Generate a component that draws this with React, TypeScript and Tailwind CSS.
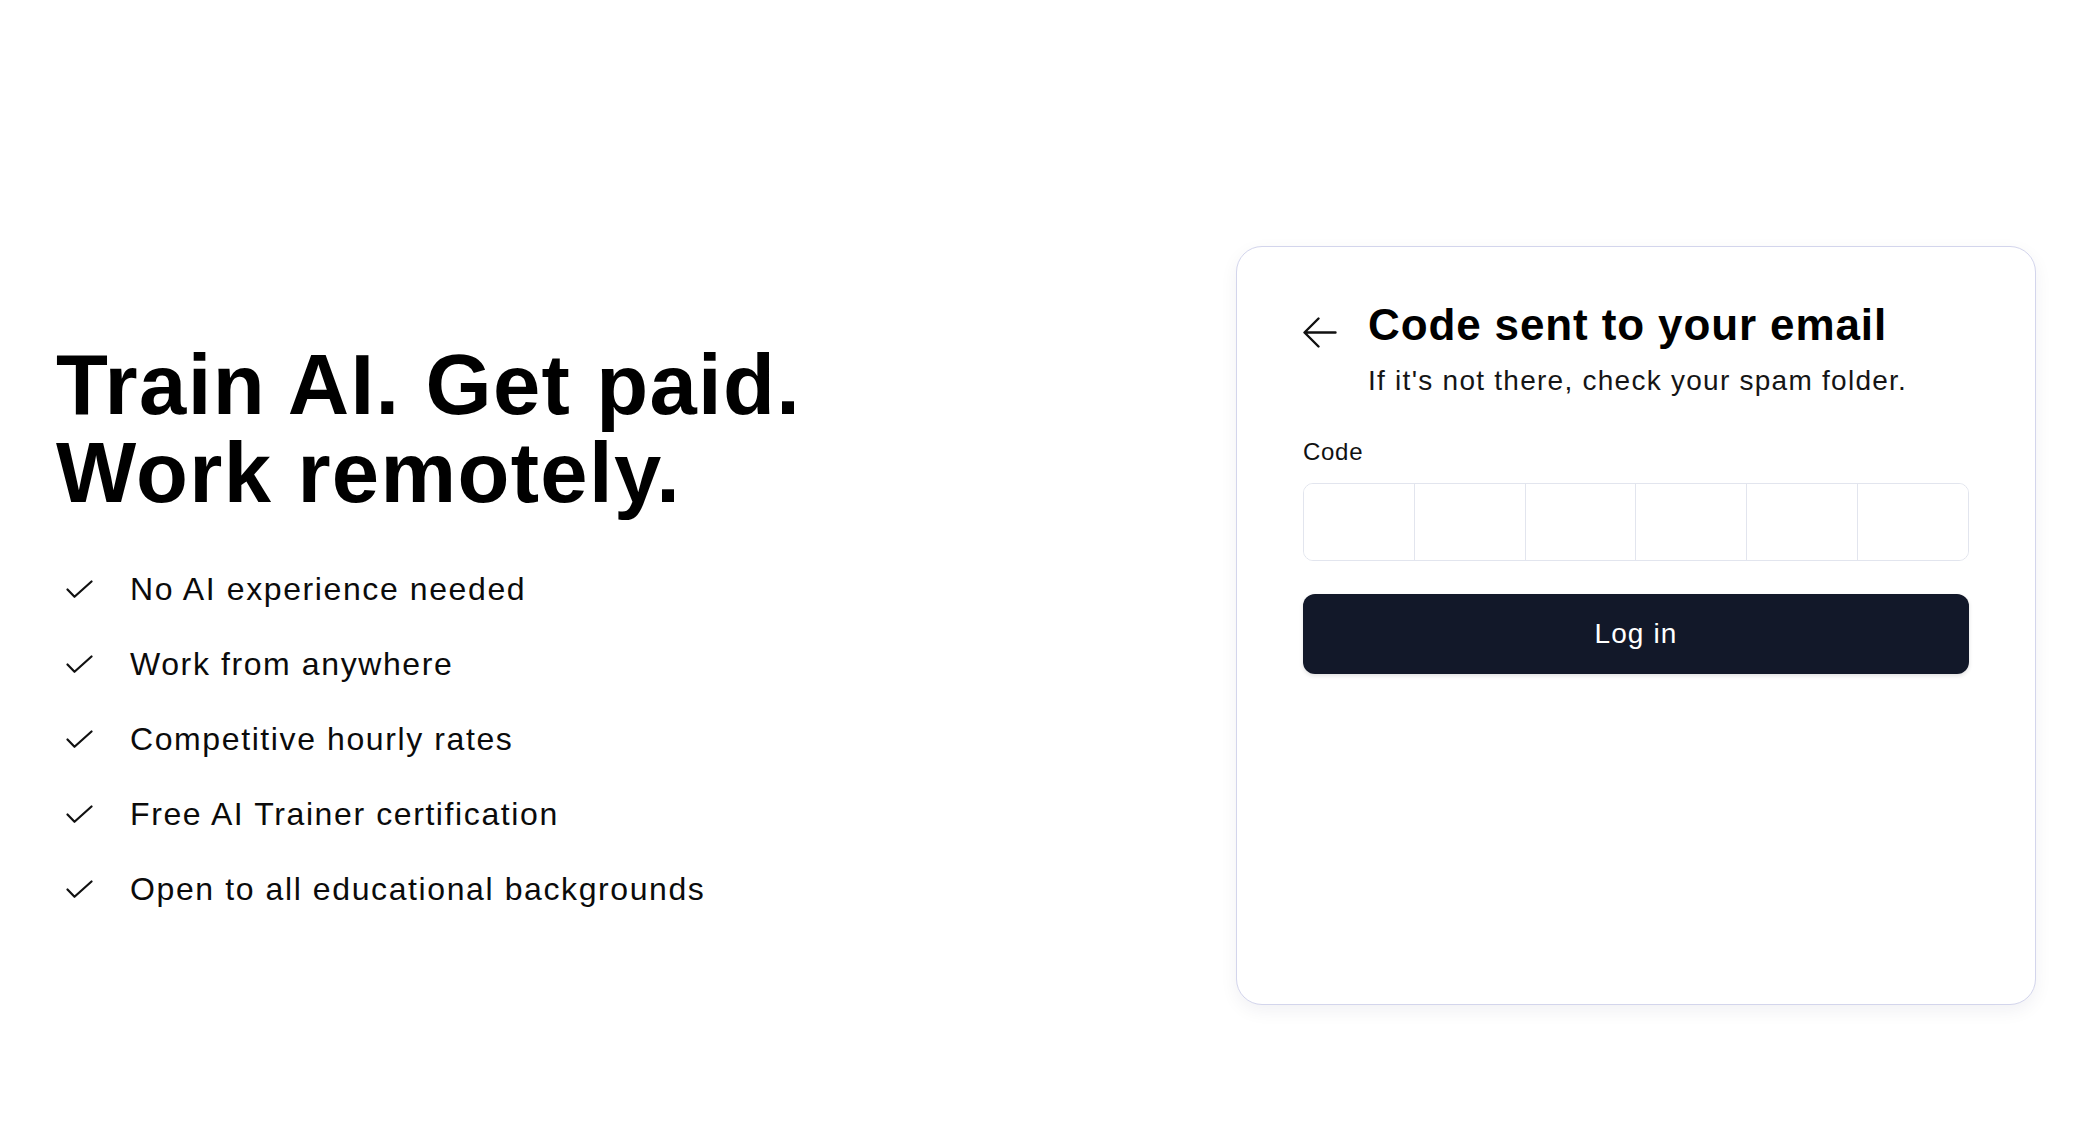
import React from 'react'

const perks = [
  'No AI experience needed',
  'Work from anywhere',
  'Competitive hourly rates',
  'Free AI Trainer certification',
  'Open to all educational backgrounds',
]

function CheckMark() {
  return (
    <svg width="27" height="19" viewBox="0 0 27 19" fill="none" className="shrink-0 ml-[10px]">
      <path d="M1.5 9.5 8.5 16.8 25.5 1.5" stroke="#111" strokeWidth="2.2" strokeLinecap="round" strokeLinejoin="round" />
    </svg>
  )
}

function BackArrow() {
  return (
    <svg width="34" height="31" viewBox="0 0 34 31" fill="none" className="shrink-0 mt-[18px]">
      <path d="M32.5 15.5H2M15.5 1.5 1.5 15.5l14 14" stroke="#111" strokeWidth="2.4" strokeLinecap="round" strokeLinejoin="round" />
    </svg>
  )
}

export default function App() {
  const cells = [0, 1, 2, 3, 4, 5]

  return (
    <main className="h-screen w-full bg-white flex flex-col text-[#0b0b0b] font-['Liberation_Sans',Arial,sans-serif]">
      <div className="h-[122px] shrink-0" />

      <div className="flex-1 flex items-center justify-between pl-[56px] pr-[52px]">
        <div className="flex flex-col">
          <h1 className="text-[85px] leading-[88px] font-bold tracking-[0.016em] text-black">
            Train AI. Get paid.
            <br />
            Work remotely.
          </h1>

          <ul className="mt-[52px] flex flex-col gap-[35px]">
            {perks.map((p) => (
              <li key={p} className="flex items-center gap-[37px]">
                <CheckMark />
                <span className="text-[32px] leading-[40px] tracking-[0.05em]">{p}</span>
              </li>
            ))}
          </ul>
        </div>

        <div className="w-[800px] h-[759px] rounded-[26px] border border-[#d3d5ec] bg-white shadow-[0_6px_18px_rgba(20,24,60,0.06)] px-[66px] pt-[52px]">
          <div className="flex items-start gap-[31px]">
            <BackArrow />
            <div className="flex flex-col">
              <h2 className="text-[44px] leading-[52px] font-bold tracking-[0.02em] text-black">Code sent to your email</h2>
              <p className="mt-[12px] text-[28px] leading-[36px] tracking-[0.045em] text-[#151515]">
                If it's not there, check your spam folder.
              </p>
            </div>
          </div>

          <label className="block mt-[37px] text-[24px] leading-[32px] tracking-[0.03em] text-[#111]">Code</label>

          <div className="mt-[15px] h-[78px] flex rounded-[10px] border border-[#e2e5ee] overflow-hidden">
            {cells.map((c) => (
              <input
                key={c}
                maxLength={1}
                className="flex-1 min-w-0 h-full text-center text-[28px] outline-none border-l border-[#e2e5ee] first:border-l-0 bg-white"
              />
            ))}
          </div>

          <button className="mt-[33px] w-full h-[80px] rounded-[12px] bg-[#121829] text-white text-[28px] tracking-[0.04em] shadow-[0_2px_4px_rgba(0,0,0,0.12)]">
            Log in
          </button>
        </div>
      </div>
    </main>
  )
}
